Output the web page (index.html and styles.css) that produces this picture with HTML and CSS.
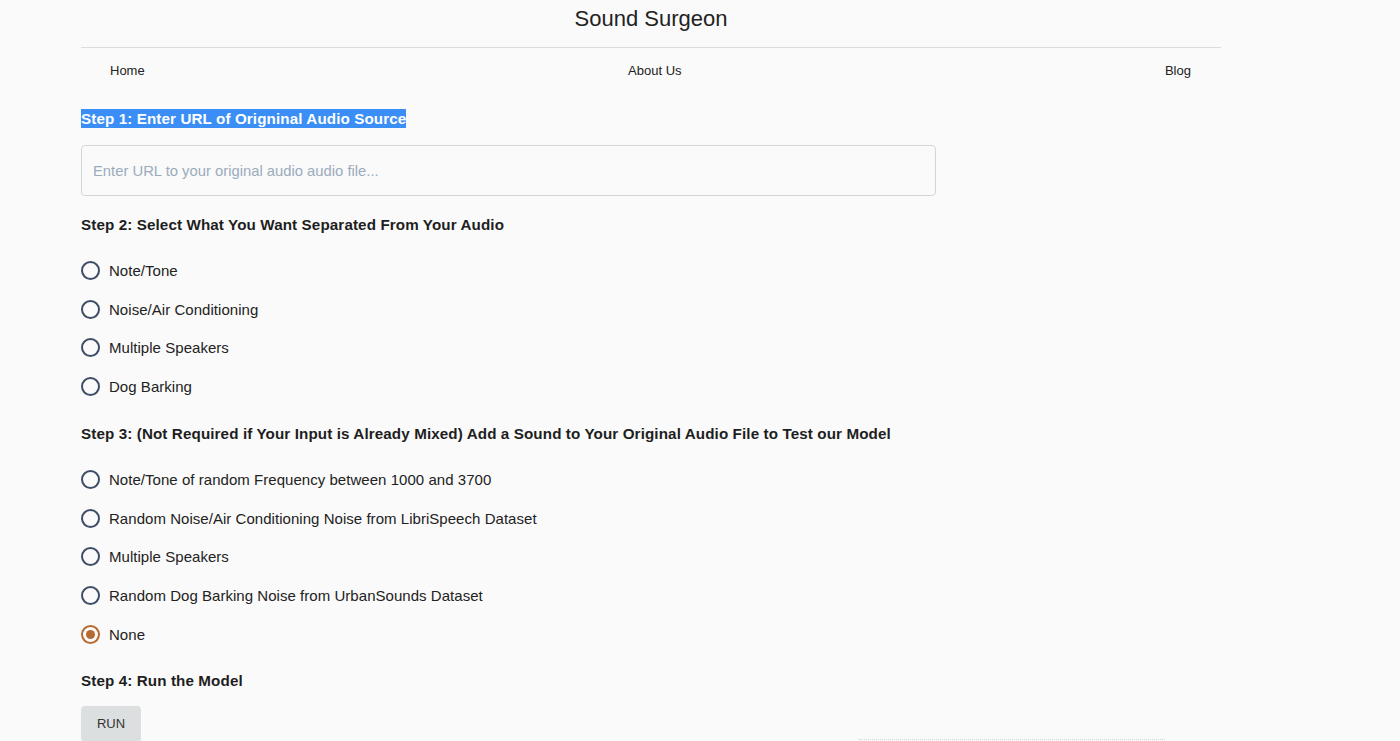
FILE: index.html
```
<!DOCTYPE html>
<html lang="en">
<head>
<meta charset="utf-8">
<title>Sound Surgeon</title>
<link rel="stylesheet" href="styles.css">
</head>
<body>
<div class="page">
  <header class="title">Sound Surgeon</header>
  <nav class="nav">
    <a href="#">Home</a>
    <a href="#">About Us</a>
    <a href="#">Blog</a>
  </nav>

  <h2 class="step step1"><span class="sel">Step 1: Enter URL of Origninal Audio Source</span></h2>
  <input class="url" type="text" placeholder="Enter URL to your original audio audio file...">

  <h2 class="step step2">Step 2: Select What You Want Separated From Your Audio</h2>
  <div class="group g1">
    <label class="opt"><span class="radio"></span>Note/Tone</label>
    <label class="opt"><span class="radio"></span>Noise/Air Conditioning</label>
    <label class="opt"><span class="radio"></span>Multiple Speakers</label>
    <label class="opt"><span class="radio"></span>Dog Barking</label>
  </div>

  <h2 class="step step3">Step 3: (Not Required if Your Input is Already Mixed) Add a Sound to Your Original Audio File to Test our Model</h2>
  <div class="group g2">
    <label class="opt"><span class="radio"></span>Note/Tone of random Frequency between 1000 and 3700</label>
    <label class="opt"><span class="radio"></span>Random Noise/Air Conditioning Noise from LibriSpeech Dataset</label>
    <label class="opt"><span class="radio"></span>Multiple Speakers</label>
    <label class="opt"><span class="radio"></span>Random Dog Barking Noise from UrbanSounds Dataset</label>
    <label class="opt"><span class="radio checked"></span>None</label>
  </div>

  <h2 class="step step4">Step 4: Run the Model</h2>
  <div class="run-row">
    <button class="run">RUN</button>
    <div class="output"></div>
  </div>
</div>
</body>
</html>
```
FILE: styles.css
```
html, body {
  margin: 0;
  padding: 0;
  background: #fafafa;
  font-family: "Liberation Sans", Arial, sans-serif;
  color: #222;
  overflow: hidden;
}
.page {
  width: 1140px;
  margin-left: 81px;
}
.title {
  height: 47px;
  line-height: 37px;
  font-size: 22px;
  text-align: center;
  color: #222;
  border-bottom: 1px solid #dcdcdc;
}
.nav {
  height: 44px;
  display: flex;
  justify-content: space-between;
  align-items: center;
  padding: 0 30px 0 29px;
  font-size: 13px;
}
.nav a {
  color: #222;
  text-decoration: none;
}
.step {
  margin: 0;
  height: 20px;
  line-height: 20px;
  font-size: 15.2px;
  font-weight: bold;
  letter-spacing: 0.11px;
  color: #1e1e1e;
}
.step1 { margin-top: 17px; }
.sel {
  background: #3a8ef5;
  color: #fff;
  padding: 1px 0;
}
.url {
  display: block;
  box-sizing: border-box;
  margin-top: 16px;
  width: 855px;
  height: 51px;
  border: 1px solid #d3d6d6;
  border-radius: 4px;
  background: #fafafa;
  padding: 0 11px;
  font-family: "Liberation Sans", Arial, sans-serif;
  font-size: 14.8px;
  outline: none;
}
.url::placeholder {
  color: #9aabbd;
}
.step2 { margin-top: 19px; }
.group {
  display: flex;
  flex-direction: column;
}
.g1 { margin-top: 16px; }
.opt {
  height: 38.75px;
  display: flex;
  align-items: center;
  font-size: 15px;
  letter-spacing: 0.04px;
  color: #222;
}
.radio {
  box-sizing: border-box;
  width: 19px;
  height: 19px;
  border: 2px solid #3e4d66;
  border-radius: 50%;
  margin-right: 9px;
  display: flex;
  align-items: center;
  justify-content: center;
}
.radio.checked {
  border-color: #b8692f;
}
.radio.checked::after {
  content: "";
  width: 9px;
  height: 9px;
  border-radius: 50%;
  background: #b8692f;
}
.step3 { margin-top: 18px; }
.g2 { margin-top: 16px; }
.step4 { margin-top: 17px; }
.run-row {
  display: flex;
  align-items: flex-end;
  margin-top: 15px;
}
.run {
  width: 60px;
  height: 36px;
  border: none;
  border-radius: 4px;
  background: #dcdfdf;
  font-family: "Liberation Sans", Arial, sans-serif;
  font-size: 13px;
  color: #333;
  padding: 0;
  margin: 0;
}
.output {
  margin-left: 718px;
  width: 306px;
  height: 1px;
  margin-bottom: 1px;
  border-top: 1px dotted #d4d4d4;
}
```
